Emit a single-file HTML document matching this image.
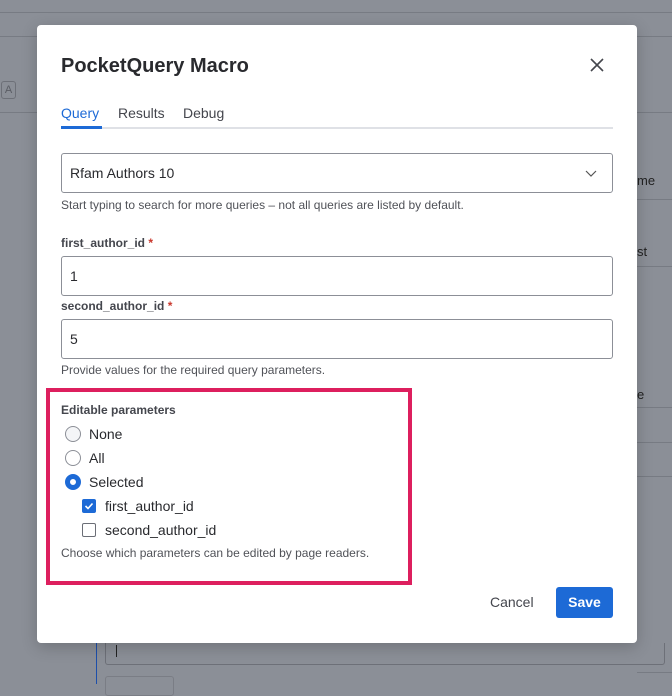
<!DOCTYPE html>
<html><head><style>
*{box-sizing:border-box;margin:0;padding:0}
body{width:672px;height:684px;background:#8b8f97;position:relative;overflow:hidden;font-family:"Liberation Sans",sans-serif;color:#292a2e}
.a{position:absolute}
.modal{left:37px;top:25px;width:600px;height:618px;background:#fff;border-radius:4px;box-shadow:0 4px 16px rgba(0,0,0,.2)}
.inp{position:absolute;left:24px;width:552px;border:1px solid #8c8f97;border-radius:3px;font-size:14px;padding-left:8px;display:flex;align-items:center;color:#292a2e}
.lbl{position:absolute;left:24px;font-size:12px;font-weight:bold;color:#44464d}
.help{position:absolute;left:24px;font-size:12px;color:#505258}
.rad{position:absolute;width:16px;height:16px;border-radius:50%;border:1px solid #8c8f97;background:#fff}
.opt{position:absolute;font-size:14px;color:#292a2e}
</style></head><body>
<div class="a" style="left:0;top:12px;width:672px;height:1px;background:#777b83"></div>
<div class="a" style="left:0;top:36px;width:672px;height:1px;background:#777b83"></div>
<div class="a" style="left:0;top:112px;width:672px;height:1px;background:#777b83"></div>
<div class="a" style="left:1px;top:81px;width:15px;height:18px;border:1px solid #6d7078;border-radius:3px;font-size:11px;color:#5a5d64;text-align:center;line-height:16px">A</div>
<div class="a" style="left:637px;top:173px;font-size:13px;color:#222">me</div>
<div class="a" style="left:637px;top:199px;width:35px;height:1px;background:#777b83"></div>
<div class="a" style="left:637px;top:244px;font-size:13px;color:#222">st</div>
<div class="a" style="left:637px;top:266px;width:35px;height:1px;background:#777b83"></div>
<div class="a" style="left:637px;top:387px;font-size:13px;color:#222">e</div>
<div class="a" style="left:637px;top:407px;width:35px;height:1px;background:#777b83"></div>
<div class="a" style="left:637px;top:442px;width:35px;height:1px;background:#777b83"></div>
<div class="a" style="left:637px;top:476px;width:35px;height:1px;background:#777b83"></div>
<div class="a" style="left:637px;top:672px;width:35px;height:1px;background:#777b83"></div>
<div class="a" style="left:96px;top:643px;width:1px;height:41px;background:#1d4faa"></div>
<div class="a" style="left:105px;top:643px;width:560px;height:22px;border:1px solid #6d7078;border-top:none;border-radius:0 0 3px 3px"></div>
<div class="a" style="left:116px;top:645px;width:1px;height:12px;background:#222"></div>
<div class="a" style="left:105px;top:676px;width:69px;height:20px;border:1px solid #7a7d85;border-radius:3px"></div>
<div class="a modal">
<div class="a" style="left:24px;top:30px;font-size:20px;font-weight:bold;color:#292a2e">PocketQuery Macro</div>
<svg class="a" style="left:552px;top:32px" width="16" height="16" viewBox="0 0 16 16"><path d="M2 2L14 14M14 2L2 14" stroke="#44464d" stroke-width="1.6"/></svg>
<div class="a" style="left:24px;top:80px;font-size:14px;color:#1d6ad6">Query</div>
<div class="a" style="left:81px;top:80px;font-size:14px;color:#44464d">Results</div>
<div class="a" style="left:146px;top:80px;font-size:14px;color:#44464d">Debug</div>
<div class="a" style="left:24px;top:102px;width:552px;height:2px;background:#dfe1e6"></div>
<div class="a" style="left:24px;top:101px;width:41px;height:3px;background:#1d6ad6"></div>
<div class="inp" style="top:128px;height:40px">Rfam Authors 10</div>
<svg class="a" style="left:547px;top:143px" width="14" height="10" viewBox="0 0 14 10"><path d="M2 3L7 8L12 3" stroke="#555" stroke-width="1.2" fill="none"/></svg>
<div class="help" style="top:173px">Start typing to search for more queries – not all queries are listed by default.</div>
<div class="lbl" style="top:211px">first_author_id <span style="color:#c9372c">*</span></div>
<div class="inp" style="top:231px;height:40px">1</div>
<div class="lbl" style="top:274px">second_author_id <span style="color:#c9372c">*</span></div>
<div class="inp" style="top:294px;height:40px">5</div>
<div class="help" style="top:338px">Provide values for the required query parameters.</div>
<div class="a" style="left:9px;top:363px;width:366px;height:197px;border:4px solid #dd1f5e"></div>
<div class="lbl" style="top:378px">Editable parameters</div>
<div class="rad" style="left:28px;top:401px;background:#f4f5f7"></div><div class="opt" style="left:52px;top:401px">None</div>
<div class="rad" style="left:28px;top:425px"></div><div class="opt" style="left:52px;top:425px">All</div>
<div class="rad" style="left:28px;top:449px;border:5px solid #1d6ad6"></div><div class="opt" style="left:52px;top:449px">Selected</div>
<div class="a" style="left:45px;top:474px;width:14px;height:14px;background:#1d6ad6;border-radius:2px"></div>
<svg class="a" style="left:45px;top:474px" width="14" height="14" viewBox="0 0 14 14"><path d="M3.5 7L6 9.5L10.5 4.5" stroke="#fff" stroke-width="1.6" fill="none"/></svg>
<div class="opt" style="left:68px;top:473px">first_author_id</div>
<div class="a" style="left:45px;top:498px;width:14px;height:14px;border:1px solid #6b6e76;border-radius:2px"></div>
<div class="opt" style="left:68px;top:497px">second_author_id</div>
<div class="help" style="top:521px">Choose which parameters can be edited by page readers.</div>
<div class="a" style="left:453px;top:569px;font-size:14px;color:#44464d">Cancel</div>
<div class="a" style="left:519px;top:562px;width:57px;height:31px;background:#1d6ad6;border-radius:3px;color:#fff;font-size:14px;font-weight:bold;text-align:center;line-height:31px">Save</div>
</div>
</body></html>
